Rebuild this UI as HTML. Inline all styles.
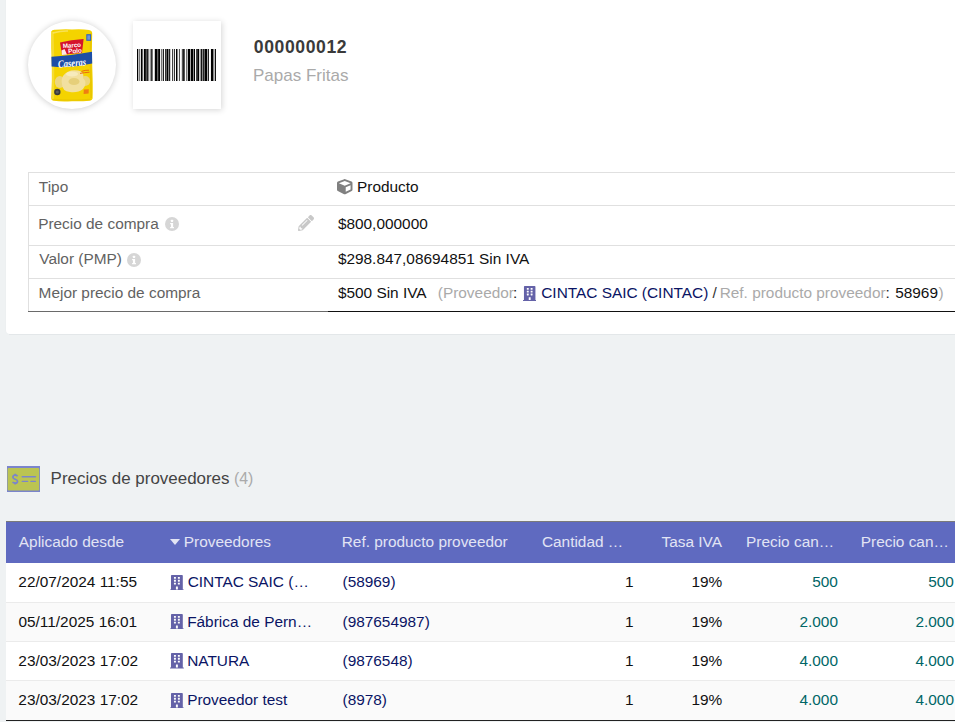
<!DOCTYPE html>
<html><head><meta charset="utf-8">
<style>
html,body{margin:0;padding:0}
body{width:955px;height:722px;overflow:hidden;position:relative;background:#eff2f3;font-family:"Liberation Sans",sans-serif}
.t{position:absolute;white-space:nowrap;line-height:20px;height:20px}
.ic{position:absolute;line-height:0}
.ic svg{display:block}
.card{position:absolute;left:6px;top:-20px;width:1000px;height:354px;background:#fff;border-radius:4px;box-shadow:0 0 2px rgba(0,0,0,.04)}
.photo{position:absolute;left:28px;top:21px;width:88px;height:88px;border-radius:50%;background:#fff;box-shadow:0 0.5px 6px rgba(0,0,0,.2)}
.bcbox{position:absolute;left:133px;top:21px;width:88px;height:88px;background:#fff;box-shadow:0.5px 0.5px 6px rgba(0,0,0,.17)}
.bt{position:absolute;left:28px;top:172px;width:940px;height:139px;border-top:1px solid #e0e0e0;border-left:1px solid #e0e0e0}
.bt .r{position:absolute;left:0;width:100%;height:0;border-top:1px solid #e0e0e0}
.btb1{position:absolute;left:28px;top:311px;width:300px;height:1px;background:#6a6a6a}
.btb2{position:absolute;left:328px;top:311px;width:700px;height:1px;background:#111}
.lh{position:absolute;left:6px;top:521px;width:1000px;height:41px;border-top:1px solid #7a7a7a;background:#5f6ac0}
.lr{position:absolute;left:6px;width:1000px;height:39px;background:#fff;border-top:1px solid #ebebeb}
.lr.odd{background:#fafafa}
.lbot{position:absolute;left:6px;top:720px;width:1000px;height:1px;background:#222}
</style></head>
<body>
<div class="card"></div><div style="position:absolute;left:9px;top:334px;width:1000px;height:1px;background:#e3e7e9"></div>
<div class="photo">
<svg width="88" height="88" viewBox="0 0 88 88" style="position:absolute;left:0;top:0">
  <!-- bag -->
  <path d="M23.2 10.5 Q24 8.6 27 8.8 Q36 7.8 44 8.4 Q54 7.8 61 8.9 Q64 9.4 64.2 12 Q63.4 30 64.4 50 Q65 66 64.6 77.5 Q64.4 79.6 61.5 79.8 Q52 80.6 44 80.2 Q33 80.8 26 79.8 Q23.2 79.6 23.2 77 Q24.2 60 23.8 44 Q23 26 23.2 10.5Z" fill="#f4d300"/>
  <path d="M24.5 11 Q25.5 40 25 78" stroke="#f8e45a" stroke-width="2.2" fill="none" opacity=".55"/>
  <path d="M62.8 12 Q62.2 44 63.2 77" stroke="#dcb800" stroke-width="1.6" fill="none" opacity=".5"/>
  <path d="M25 78.5 Q44 79.8 63 78.5" stroke="#e2c000" stroke-width="1.4" fill="none" opacity=".6"/>
  <!-- red logo -->
  <path d="M32 21.6 Q43 18.8 55.6 18 L54 32 Q44 32.4 34 33.8Z" fill="#d5142b"/>
  <text x="44" y="26.4" font-size="6.2" font-family="Liberation Sans" font-weight="bold" fill="#fff" text-anchor="middle" transform="rotate(-4 44 26)">Marco</text>
  <text x="47" y="32" font-size="6.4" font-family="Liberation Sans" font-weight="bold" fill="#fff" text-anchor="middle" transform="rotate(-3 47 30)">Polo</text>
  <path d="M33.5 29.5 L36.5 28 L39 33.5 L34 33.9Z" fill="#fff" opacity=".9"/>
  <rect x="58.3" y="13.2" width="4.8" height="6.6" fill="#2c62c0"/>
  <rect x="59.3" y="14.3" width="2.8" height="4.4" fill="#6f93d8"/>
  <!-- blue band -->
  <path d="M23.4 35.8 Q42 34.6 64 30.8 L64.2 42.6 Q44 47.4 23.6 45.4Z" fill="#1d4ea6"/>
  <text x="44" y="45.6" font-size="10.6" font-family="Liberation Serif" font-style="italic" font-weight="bold" fill="#fff" text-anchor="middle" transform="rotate(-5 44 42)" textLength="28" lengthAdjust="spacingAndGlyphs">Caseras</text>
  <!-- chips -->
  <ellipse cx="31.8" cy="61" rx="5" ry="6" fill="#ecd67e"/>
  <ellipse cx="57.2" cy="60" rx="5" ry="5" fill="#ecd67e"/>
  <path d="M35 55 Q40 48 50 49.5 Q57 51 55 57 Q60 62 55 68 Q50 72 42 71 Q34 70 34 63 Q33 58 35 55Z" fill="#f2e0a0"/>
  <ellipse cx="46" cy="60.5" rx="5.5" ry="3.6" fill="#e6cf7a"/>
  <ellipse cx="44" cy="53" rx="6" ry="2.6" fill="#f7ebbd"/>
  <circle cx="29.3" cy="71" r="3.2" fill="#3a3a3a"/>
  <circle cx="29.3" cy="71" r="1.6" fill="#5c5c5c"/>
  <path d="M53.5 50.4 Q57 49 61 49.2 M52 52.4 Q56 51.6 61.5 51.2" stroke="#ea6a10" stroke-width="1" fill="none"/>
  <path d="M55.8 68.6 L60.8 68.2 L60.6 72.4 L55.6 72.9Z" fill="#ef7e12"/>
  <path d="M24.8 12 Q34 9.6 40 10" stroke="#fae878" stroke-width="1.6" fill="none" opacity=".7"/>
</svg>
</div>
<div class="bcbox"></div>
<svg class="ic" style="left:133px;top:49px" width="88" height="32" viewBox="0 0 88 32" shape-rendering="crispEdges"><rect x="4" y="0" width="1" height="32" fill="#000"/><rect x="5" y="0" width="1" height="32" fill="#bbb"/><rect x="6" y="0" width="1" height="32" fill="#777"/><rect x="7" y="0" width="1" height="32" fill="#ddd"/><rect x="8" y="0" width="1" height="32" fill="#000"/><rect x="9" y="0" width="1" height="32" fill="#666"/><rect x="10" y="0" width="1" height="32" fill="#ddd"/><rect x="11" y="0" width="1" height="32" fill="#000"/><rect x="12" y="0" width="1" height="32" fill="#222"/><rect x="13" y="0" width="1" height="32" fill="#555"/><rect x="14" y="0" width="1" height="32" fill="#222"/><rect x="15" y="0" width="1" height="32" fill="#888"/><rect x="16" y="0" width="1" height="32" fill="#ddd"/><rect x="17" y="0" width="1" height="32" fill="#999"/><rect x="18" y="0" width="1" height="32" fill="#333"/><rect x="19" y="0" width="1" height="32" fill="#777"/><rect x="21" y="0" width="1" height="32" fill="#ccc"/><rect x="22" y="0" width="1" height="32" fill="#000"/><rect x="23" y="0" width="1" height="32" fill="#000"/><rect x="24" y="0" width="1" height="32" fill="#666"/><rect x="25" y="0" width="1" height="32" fill="#222"/><rect x="26" y="0" width="1" height="32" fill="#000"/><rect x="27" y="0" width="1" height="32" fill="#eee"/><rect x="28" y="0" width="1" height="32" fill="#777"/><rect x="29" y="0" width="1" height="32" fill="#bbb"/><rect x="30" y="0" width="1" height="32" fill="#222"/><rect x="32" y="0" width="1" height="32" fill="#333"/><rect x="33" y="0" width="1" height="32" fill="#666"/><rect x="34" y="0" width="1" height="32" fill="#000"/><rect x="35" y="0" width="1" height="32" fill="#888"/><rect x="36" y="0" width="1" height="32" fill="#222"/><rect x="37" y="0" width="1" height="32" fill="#ccc"/><rect x="39" y="0" width="1" height="32" fill="#444"/><rect x="40" y="0" width="1" height="32" fill="#ddd"/><rect x="41" y="0" width="1" height="32" fill="#333"/><rect x="43" y="0" width="1" height="32" fill="#000"/><rect x="44" y="0" width="1" height="32" fill="#888"/><rect x="45" y="0" width="1" height="32" fill="#eee"/><rect x="46" y="0" width="1" height="32" fill="#555"/><rect x="48" y="0" width="1" height="32" fill="#ddd"/><rect x="49" y="0" width="1" height="32" fill="#555"/><rect x="50" y="0" width="1" height="32" fill="#222"/><rect x="51" y="0" width="1" height="32" fill="#555"/><rect x="53" y="0" width="1" height="32" fill="#777"/><rect x="54" y="0" width="1" height="32" fill="#bbb"/><rect x="55" y="0" width="1" height="32" fill="#000"/><rect x="56" y="0" width="1" height="32" fill="#000"/><rect x="57" y="0" width="1" height="32" fill="#aaa"/><rect x="58" y="0" width="1" height="32" fill="#000"/><rect x="59" y="0" width="1" height="32" fill="#000"/><rect x="60" y="0" width="1" height="32" fill="#888"/><rect x="61" y="0" width="1" height="32" fill="#000"/><rect x="63" y="0" width="1" height="32" fill="#444"/><rect x="64" y="0" width="1" height="32" fill="#333"/><rect x="65" y="0" width="1" height="32" fill="#000"/><rect x="66" y="0" width="1" height="32" fill="#ccc"/><rect x="67" y="0" width="1" height="32" fill="#999"/><rect x="68" y="0" width="1" height="32" fill="#111"/><rect x="69" y="0" width="1" height="32" fill="#888"/><rect x="70" y="0" width="1" height="32" fill="#222"/><rect x="71" y="0" width="1" height="32" fill="#666"/><rect x="72" y="0" width="1" height="32" fill="#000"/><rect x="73" y="0" width="1" height="32" fill="#000"/><rect x="74" y="0" width="1" height="32" fill="#aaa"/><rect x="75" y="0" width="1" height="32" fill="#222"/><rect x="77" y="0" width="1" height="32" fill="#eee"/><rect x="78" y="0" width="1" height="32" fill="#000"/><rect x="79" y="0" width="1" height="32" fill="#000"/><rect x="80" y="0" width="1" height="32" fill="#888"/><rect x="81" y="0" width="1" height="32" fill="#bbb"/><rect x="82" y="0" width="1" height="32" fill="#111"/></svg>

<div class="bt">
  <div class="r" style="top:32px"></div>
  <div class="r" style="top:72px"></div>
  <div class="r" style="top:105px"></div>
</div>
<div class="btb1"></div><div class="btb2"></div>

<!-- section icon -->
<svg class="ic" style="left:7px;top:466px" width="33" height="26" viewBox="0 0 33 26">
  <rect x="0" y="0" width="33" height="26" fill="#7b85cc"/>
  <rect x="0.6" y="2" width="31.6" height="22.6" rx="1" fill="#bbc452"/>
  <path d="M10.6 10.2 Q9.6 9.1 8.1 9.2 Q5.8 9.4 5.9 11.3 Q6.1 12.6 8.2 13.2 Q10.6 13.9 10.6 15.4 Q10.4 17.2 8.1 17.2 Q6.4 17.1 5.6 16" stroke="#7b85cc" stroke-width="1.7" fill="none"/>
  <path d="M8.2 7.8v1.8M8.2 16.6v1.8" stroke="#7b85cc" stroke-width="1.7"/>
  <path d="M15.3 10.7h13.1" stroke="#7b85cc" stroke-width="1.6" stroke-linecap="round"/>
  <path d="M15.3 15.4h5.3M24 15.4h4.3" stroke="#7b85cc" stroke-width="1.4" stroke-linecap="round"/>
</svg>

<div class="lh"></div>
<div class="lr" style="top:563px;border-top:0;height:39px"></div>
<div class="lr odd" style="top:602px"></div>
<div class="lr" style="top:641px"></div>
<div class="lr odd" style="top:680px;height:40px"></div>
<div class="lbot"></div>

<div class="t" style="left:253.78px;top:36.90px;font-size:17.6px;color:#3a3a3a;font-weight:bold;letter-spacing:0.6px;">000000012</div>
<div class="t" style="left:253.03px;top:65.91px;font-size:17px;color:#aaa;">Papas Fritas</div>
<div class="t" style="left:38.83px;top:176.96px;font-size:15.4px;color:#626262;">Tipo</div>
<div class="ic" style="left:337.3px;top:179px;width:15.5px;height:15.5px"><svg viewBox="0 0 512 512" width="15.5" height="15.5"><path fill="#808080" d="M239.1 6.3l-208 78c-18.7 7-31.1 25-31.1 45v225.1c0 18.2 10.3 34.8 26.5 42.9l208 104c13.5 6.8 29.4 6.8 42.9 0l208-104c16.3-8.1 26.5-24.8 26.5-42.9V129.3c0-20-12.4-37.9-31.1-44.9l-208-78C262 2.2 250 2.2 239.1 6.3zM256 68.4l192 72v1.1l-192 78-192-78v-1.1l192-72zm32 356V275.5l160-65v133.9l-160 80z"/></svg></div>
<div class="t" style="left:357.05px;top:176.96px;font-size:15.4px;color:#111;">Producto</div>
<div class="t" style="left:38.15px;top:213.96px;font-size:15.4px;color:#626262;">Precio de compra</div>
<div class="ic" style="left:165.4px;top:217.0px;width:14px;height:14px"><svg viewBox="0 0 20 20" width="14" height="14"><circle cx="10" cy="10" r="10" fill="#d6d6d6"/><rect x="8.4" y="4" width="3.2" height="3" rx=".6" fill="#fff"/><path d="M7.3 8.6h4.3v5.6h1.2v1.9H7.3v-1.9h1.2v-3.7H7.3z" fill="#fff"/></svg></div>
<div class="ic" style="left:298.4px;top:215.2px;width:16px;height:16px"><svg viewBox="0 0 512 512" width="16" height="16"><path fill="#c8c8c8" d="M497.9 142.1l-46.1 46.1c-4.7 4.7-12.3 4.7-17 0l-111-111c-4.7-4.7-4.7-12.3 0-17l46.1-46.1c18.7-18.7 49.1-18.7 67.9 0l60.1 60.1c18.800 18.7 18.8 49.1 0 67.9zM284.2 99.8L21.6 362.4.4 483.9c-2.9 16.4 11.4 30.6 27.8 27.8l121.5-21.3 262.6-262.6c4.7-4.7 4.7-12.3 0-17l-111-111c-4.8-4.7-12.4-4.7-17.1 0zM124.1 339.9c-5.5-5.5-5.5-14.3 0-19.8l154-154c5.5-5.5 14.3-5.5 19.8 0s5.5 14.3 0 19.8l-154 154c-5.5 5.5-14.3 5.5-19.8 0zM88 424h48v36.3l-64.5 11.3-31.1-31.1L51.7 376H88v48z"/></svg></div>
<div class="t" style="left:337.88px;top:213.96px;font-size:15.4px;color:#111;">$800,000000</div>
<div class="t" style="left:39.27px;top:248.86px;font-size:15.4px;color:#626262;">Valor (PMP)</div>
<div class="ic" style="left:127.30000000000001px;top:253.10000000000002px;width:14px;height:14px"><svg viewBox="0 0 20 20" width="14" height="14"><circle cx="10" cy="10" r="10" fill="#d6d6d6"/><rect x="8.4" y="4" width="3.2" height="3" rx=".6" fill="#fff"/><path d="M7.3 8.6h4.3v5.6h1.2v1.9H7.3v-1.9h1.2v-3.7H7.3z" fill="#fff"/></svg></div>
<div class="t" style="left:337.88px;top:248.86px;font-size:15.4px;color:#111;">$298.847,08694851 Sin IVA</div>
<div class="t" style="left:38.61px;top:282.66px;font-size:15.4px;color:#626262;">Mejor precio de compra</div>
<div class="t" style="left:337.88px;top:282.66px;font-size:15.4px;color:#111;">$500 Sin IVA</div>
<div class="t" style="left:437.80px;top:282.66px;font-size:15.4px;color:#aaa;">(Proveedor</div>
<div class="t" style="left:513.12px;top:282.66px;font-size:15.4px;color:#222;">:</div>
<div class="ic" style="left:523px;top:286px;width:13.4px;height:15px"><svg viewBox="0 0 448 512" width="13.4" height="15" preserveAspectRatio="none"><path fill="#6462a8" d="M436 480h-20V24c0-13.255-10.745-24-24-24H56C42.745 0 32 10.745 32 24v456H12c-6.627 0-12 5.373-12 12v20h448v-20c0-6.627-5.373-12-12-12zM128 76c0-6.627 5.373-12 12-12h40c6.627 0 12 5.373 12 12v40c0 6.627-5.373 12-12 12h-40c-6.627 0-12-5.373-12-12V76zm0 96c0-6.627 5.373-12 12-12h40c6.627 0 12 5.373 12 12v40c0 6.627-5.373 12-12 12h-40c-6.627 0-12-5.373-12-12v-40zm52 148h-40c-6.627 0-12-5.373-12-12v-40c0-6.627 5.373-12 12-12h40c6.627 0 12 5.373 12 12v40c0 6.627-5.373 12-12 12zm76 160h-64v-84c0-6.627 5.373-12 12-12h40c6.627 0 12 5.373 12 12v84zm64-172c0 6.627-5.373 12-12 12h-40c-6.627 0-12-5.373-12-12v-40c0-6.627 5.373-12 12-12h40c6.627 0 12 5.373 12 12v40zm0-96c0 6.627-5.373 12-12 12h-40c-6.627 0-12-5.373-12-12v-40c0-6.627 5.373-12 12-12h40c6.627 0 12 5.373 12 12v40zm0-96c0 6.627-5.373 12-12 12h-40c-6.627 0-12-5.373-12-12V76c0-6.627 5.373-12 12-12h40c6.627 0 12 5.373 12 12v40z"/></svg></div>
<div class="t" style="left:541.25px;top:282.66px;font-size:15.4px;color:#0a1464;">CINTAC SAIC (CINTAC)</div>
<div class="t" style="left:712.60px;top:282.66px;font-size:15.4px;color:#333;">/</div>
<div class="t" style="left:719.65px;top:282.66px;font-size:15.4px;color:#aaa;">Ref. producto proveedor</div>
<div class="t" style="left:885.62px;top:282.66px;font-size:15.4px;color:#222;">:</div>
<div class="t" style="left:895.17px;top:282.66px;font-size:15.4px;color:#111;">58969</div>
<div class="t" style="left:938.58px;top:282.66px;font-size:15.4px;color:#aaa;">)</div>
<div class="t" style="left:50.62px;top:469.03px;font-size:16.95px;color:#444;">Precios de proveedores</div>
<div class="t" style="left:234.00px;top:469.42px;font-size:15.8px;color:#aaa;">(4)</div>
<div class="t" style="left:18.85px;top:531.96px;font-size:15.4px;color:#e2e4f4;">Aplicado desde</div>
<div class="ic" style="left:169.8px;top:539px;width:0;height:0;border-left:5.1px solid transparent;border-right:5.1px solid transparent;border-top:6.2px solid #e2e4f4"></div>
<div class="t" style="left:183.75px;top:531.96px;font-size:15.4px;color:#e2e4f4;">Proveedores</div>
<div class="t" style="left:341.75px;top:531.96px;font-size:15.4px;color:#e2e4f4;">Ref. producto proveedor</div>
<div class="t" style="left:541.95px;top:531.96px;font-size:15.4px;color:#e2e4f4;">Cantidad …</div>
<div class="t" style="left:661.55px;top:531.96px;font-size:15.4px;color:#e2e4f4;">Tasa IVA</div>
<div class="t" style="left:746.05px;top:531.96px;font-size:15.4px;color:#e2e4f4;">Precio can…</div>
<div class="t" style="left:860.75px;top:531.96px;font-size:15.4px;color:#e2e4f4;">Precio can…</div>
<div class="t" style="left:18.35px;top:572.26px;font-size:15.4px;color:#111;">22/07/2024 11:55</div>
<div class="ic" style="left:170.2px;top:574.7px;width:13.8px;height:15.4px"><svg viewBox="0 0 448 512" width="13.8" height="15.4" preserveAspectRatio="none"><path fill="#6462a8" d="M436 480h-20V24c0-13.255-10.745-24-24-24H56C42.745 0 32 10.745 32 24v456H12c-6.627 0-12 5.373-12 12v20h448v-20c0-6.627-5.373-12-12-12zM128 76c0-6.627 5.373-12 12-12h40c6.627 0 12 5.373 12 12v40c0 6.627-5.373 12-12 12h-40c-6.627 0-12-5.373-12-12V76zm0 96c0-6.627 5.373-12 12-12h40c6.627 0 12 5.373 12 12v40c0 6.627-5.373 12-12 12h-40c-6.627 0-12-5.373-12-12v-40zm52 148h-40c-6.627 0-12-5.373-12-12v-40c0-6.627 5.373-12 12-12h40c6.627 0 12 5.373 12 12v40c0 6.627-5.373 12-12 12zm76 160h-64v-84c0-6.627 5.373-12 12-12h40c6.627 0 12 5.373 12 12v84zm64-172c0 6.627-5.373 12-12 12h-40c-6.627 0-12-5.373-12-12v-40c0-6.627 5.373-12 12-12h40c6.627 0 12 5.373 12 12v40zm0-96c0 6.627-5.373 12-12 12h-40c-6.627 0-12-5.373-12-12v-40c0-6.627 5.373-12 12-12h40c6.627 0 12 5.373 12 12v40zm0-96c0 6.627-5.373 12-12 12h-40c-6.627 0-12-5.373-12-12V76c0-6.627 5.373-12 12-12h40c6.627 0 12 5.373 12 12v40z"/></svg></div>
<div class="t" style="left:187.65px;top:572.26px;font-size:15.4px;color:#0a1464;">CINTAC SAIC (…</div>
<div class="t" style="left:342.50px;top:572.26px;font-size:15.4px;color:#0a1464;">(58969)</div>
<div class="t" style="left:624.95px;top:572.26px;font-size:15.4px;color:#111;">1</div>
<div class="t" style="left:691.48px;top:572.26px;font-size:15.4px;color:#111;">19%</div>
<div class="t" style="left:812.20px;top:572.26px;font-size:15.4px;color:#066;">500</div>
<div class="t" style="left:928.20px;top:572.26px;font-size:15.4px;color:#066;">500</div>
<div class="t" style="left:18.48px;top:611.56px;font-size:15.4px;color:#111;">05/11/2025 16:01</div>
<div class="ic" style="left:170.2px;top:614.0px;width:13.8px;height:15.4px"><svg viewBox="0 0 448 512" width="13.8" height="15.4" preserveAspectRatio="none"><path fill="#6462a8" d="M436 480h-20V24c0-13.255-10.745-24-24-24H56C42.745 0 32 10.745 32 24v456H12c-6.627 0-12 5.373-12 12v20h448v-20c0-6.627-5.373-12-12-12zM128 76c0-6.627 5.373-12 12-12h40c6.627 0 12 5.373 12 12v40c0 6.627-5.373 12-12 12h-40c-6.627 0-12-5.373-12-12V76zm0 96c0-6.627 5.373-12 12-12h40c6.627 0 12 5.373 12 12v40c0 6.627-5.373 12-12 12h-40c-6.627 0-12-5.373-12-12v-40zm52 148h-40c-6.627 0-12-5.373-12-12v-40c0-6.627 5.373-12 12-12h40c6.627 0 12 5.373 12 12v40c0 6.627-5.373 12-12 12zm76 160h-64v-84c0-6.627 5.373-12 12-12h40c6.627 0 12 5.373 12 12v84zm64-172c0 6.627-5.373 12-12 12h-40c-6.627 0-12-5.373-12-12v-40c0-6.627 5.373-12 12-12h40c6.627 0 12 5.373 12 12v40zm0-96c0 6.627-5.373 12-12 12h-40c-6.627 0-12-5.373-12-12v-40c0-6.627 5.373-12 12-12h40c6.627 0 12 5.373 12 12v40zm0-96c0 6.627-5.373 12-12 12h-40c-6.627 0-12-5.373-12-12V76c0-6.627 5.373-12 12-12h40c6.627 0 12 5.373 12 12v40z"/></svg></div>
<div class="t" style="left:187.15px;top:611.56px;font-size:15.4px;color:#0a1464;">Fábrica de Pern…</div>
<div class="t" style="left:342.50px;top:611.56px;font-size:15.4px;color:#0a1464;">(987654987)</div>
<div class="t" style="left:624.95px;top:611.56px;font-size:15.4px;color:#111;">1</div>
<div class="t" style="left:691.48px;top:611.56px;font-size:15.4px;color:#111;">19%</div>
<div class="t" style="left:799.45px;top:611.56px;font-size:15.4px;color:#066;">2.000</div>
<div class="t" style="left:915.45px;top:611.56px;font-size:15.4px;color:#066;">2.000</div>
<div class="t" style="left:18.35px;top:650.86px;font-size:15.4px;color:#111;">23/03/2023 17:02</div>
<div class="ic" style="left:170.2px;top:653.3000000000001px;width:13.8px;height:15.4px"><svg viewBox="0 0 448 512" width="13.8" height="15.4" preserveAspectRatio="none"><path fill="#6462a8" d="M436 480h-20V24c0-13.255-10.745-24-24-24H56C42.745 0 32 10.745 32 24v456H12c-6.627 0-12 5.373-12 12v20h448v-20c0-6.627-5.373-12-12-12zM128 76c0-6.627 5.373-12 12-12h40c6.627 0 12 5.373 12 12v40c0 6.627-5.373 12-12 12h-40c-6.627 0-12-5.373-12-12V76zm0 96c0-6.627 5.373-12 12-12h40c6.627 0 12 5.373 12 12v40c0 6.627-5.373 12-12 12h-40c-6.627 0-12-5.373-12-12v-40zm52 148h-40c-6.627 0-12-5.373-12-12v-40c0-6.627 5.373-12 12-12h40c6.627 0 12 5.373 12 12v40c0 6.627-5.373 12-12 12zm76 160h-64v-84c0-6.627 5.373-12 12-12h40c6.627 0 12 5.373 12 12v84zm64-172c0 6.627-5.373 12-12 12h-40c-6.627 0-12-5.373-12-12v-40c0-6.627 5.373-12 12-12h40c6.627 0 12 5.373 12 12v40zm0-96c0 6.627-5.373 12-12 12h-40c-6.627 0-12-5.373-12-12v-40c0-6.627 5.373-12 12-12h40c6.627 0 12 5.373 12 12v40zm0-96c0 6.627-5.373 12-12 12h-40c-6.627 0-12-5.373-12-12V76c0-6.627 5.373-12 12-12h40c6.627 0 12 5.373 12 12v40z"/></svg></div>
<div class="t" style="left:187.15px;top:650.86px;font-size:15.4px;color:#0a1464;">NATURA</div>
<div class="t" style="left:342.50px;top:650.86px;font-size:15.4px;color:#0a1464;">(9876548)</div>
<div class="t" style="left:624.95px;top:650.86px;font-size:15.4px;color:#111;">1</div>
<div class="t" style="left:691.48px;top:650.86px;font-size:15.4px;color:#111;">19%</div>
<div class="t" style="left:799.45px;top:650.86px;font-size:15.4px;color:#066;">4.000</div>
<div class="t" style="left:915.45px;top:650.86px;font-size:15.4px;color:#066;">4.000</div>
<div class="t" style="left:18.35px;top:690.16px;font-size:15.4px;color:#111;">23/03/2023 17:02</div>
<div class="ic" style="left:170.2px;top:692.6px;width:13.8px;height:15.4px"><svg viewBox="0 0 448 512" width="13.8" height="15.4" preserveAspectRatio="none"><path fill="#6462a8" d="M436 480h-20V24c0-13.255-10.745-24-24-24H56C42.745 0 32 10.745 32 24v456H12c-6.627 0-12 5.373-12 12v20h448v-20c0-6.627-5.373-12-12-12zM128 76c0-6.627 5.373-12 12-12h40c6.627 0 12 5.373 12 12v40c0 6.627-5.373 12-12 12h-40c-6.627 0-12-5.373-12-12V76zm0 96c0-6.627 5.373-12 12-12h40c6.627 0 12 5.373 12 12v40c0 6.627-5.373 12-12 12h-40c-6.627 0-12-5.373-12-12v-40zm52 148h-40c-6.627 0-12-5.373-12-12v-40c0-6.627 5.373-12 12-12h40c6.627 0 12 5.373 12 12v40c0 6.627-5.373 12-12 12zm76 160h-64v-84c0-6.627 5.373-12 12-12h40c6.627 0 12 5.373 12 12v84zm64-172c0 6.627-5.373 12-12 12h-40c-6.627 0-12-5.373-12-12v-40c0-6.627 5.373-12 12-12h40c6.627 0 12 5.373 12 12v40zm0-96c0 6.627-5.373 12-12 12h-40c-6.627 0-12-5.373-12-12v-40c0-6.627 5.373-12 12-12h40c6.627 0 12 5.373 12 12v40zm0-96c0 6.627-5.373 12-12 12h-40c-6.627 0-12-5.373-12-12V76c0-6.627 5.373-12 12-12h40c6.627 0 12 5.373 12 12v40z"/></svg></div>
<div class="t" style="left:187.15px;top:690.16px;font-size:15.4px;color:#0a1464;">Proveedor test</div>
<div class="t" style="left:342.50px;top:690.16px;font-size:15.4px;color:#0a1464;">(8978)</div>
<div class="t" style="left:624.95px;top:690.16px;font-size:15.4px;color:#111;">1</div>
<div class="t" style="left:691.48px;top:690.16px;font-size:15.4px;color:#111;">19%</div>
<div class="t" style="left:799.45px;top:690.16px;font-size:15.4px;color:#066;">4.000</div>
<div class="t" style="left:915.45px;top:690.16px;font-size:15.4px;color:#066;">4.000</div>
</body></html>
